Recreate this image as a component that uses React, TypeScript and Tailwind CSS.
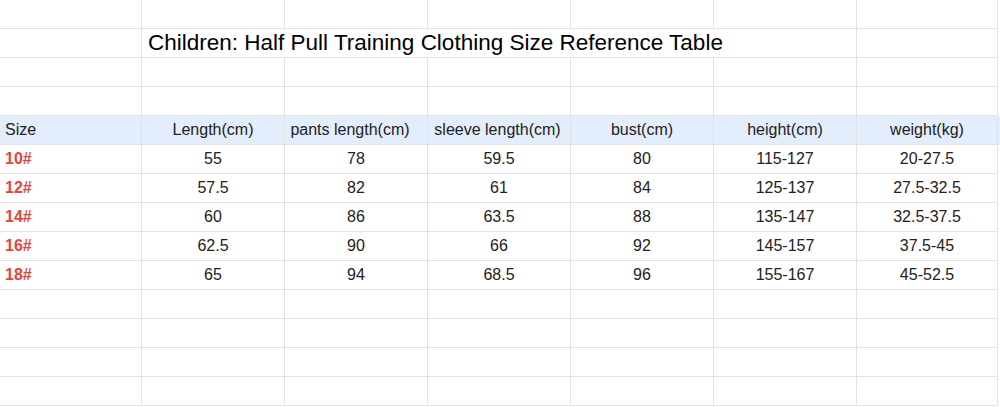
const COLS = ["w-[142px]", "w-[143px]", "w-[143px]", "w-[143px]", "w-[143px]", "w-[143px]", "w-[141px]"];

const HEADER = ["Size", "Length(cm)", "pants length(cm)", "sleeve length(cm)", "bust(cm)", "height(cm)", "weight(kg)"];

const ROWS = [
  ["10#", "55", "78", "59.5", "80", "115-127", "20-27.5"],
  ["12#", "57.5", "82", "61", "84", "125-137", "27.5-32.5"],
  ["14#", "60", "86", "63.5", "88", "135-147", "32.5-37.5"],
  ["16#", "62.5", "90", "66", "92", "145-157", "37.5-45"],
  ["18#", "65", "94", "68.5", "96", "155-167", "45-52.5"],
];

function EmptyRow() {
  return (
    <div className="flex h-[29px]">
      {COLS.map((w, i) => (
        <div key={i} className={`${w} shrink-0 border-r border-b border-[#e2e2e2]`} />
      ))}
    </div>
  );
}

export default function App() {
  return (
    <div className="w-[1000px] h-[407px] bg-white overflow-hidden text-[16px] text-[#222]" style={{ fontFamily: '"Liberation Sans", Arial, sans-serif' }}>
      <EmptyRow />
      {/* title row, merged across B..F */}
      <div className="flex h-[29px]">
        <div className={`${COLS[0]} shrink-0 border-r border-b border-[#e2e2e2]`} />
        <div className="w-[715px] shrink-0 border-r border-b border-[#e2e2e2] flex items-center pl-[6px] text-[22.5px] text-black whitespace-nowrap">
          Children: Half Pull Training Clothing Size Reference Table
        </div>
        <div className={`${COLS[6]} shrink-0 border-r border-b border-[#e2e2e2]`} />
      </div>
      <EmptyRow />
      <EmptyRow />
      <div className="flex h-[29px] bg-[#e4edfb]">
        {HEADER.map((h, i) => (
          <div
            key={i}
            className={`${COLS[i]} shrink-0 border-r border-b border-[#e2e2e2] flex items-center whitespace-nowrap ${
              i === 0 ? "pl-[5px]" : i === 2 ? "justify-center pr-[12px]" : i === 3 ? "justify-center pr-[3px]" : "justify-center"
            }`}
          >
            {h}
          </div>
        ))}
      </div>
      {ROWS.map((row, r) => (
        <div key={r} className="flex h-[29px]">
          {row.map((c, i) => (
            <div
              key={i}
              className={`${COLS[i]} shrink-0 border-r border-b border-[#e2e2e2] flex items-center whitespace-nowrap ${
                i === 0 ? "pl-[5px] font-bold text-[#e2453b]" : "justify-center"
              }`}
            >
              {c}
            </div>
          ))}
        </div>
      ))}
      <EmptyRow />
      <EmptyRow />
      <EmptyRow />
      <EmptyRow />
    </div>
  );
}
